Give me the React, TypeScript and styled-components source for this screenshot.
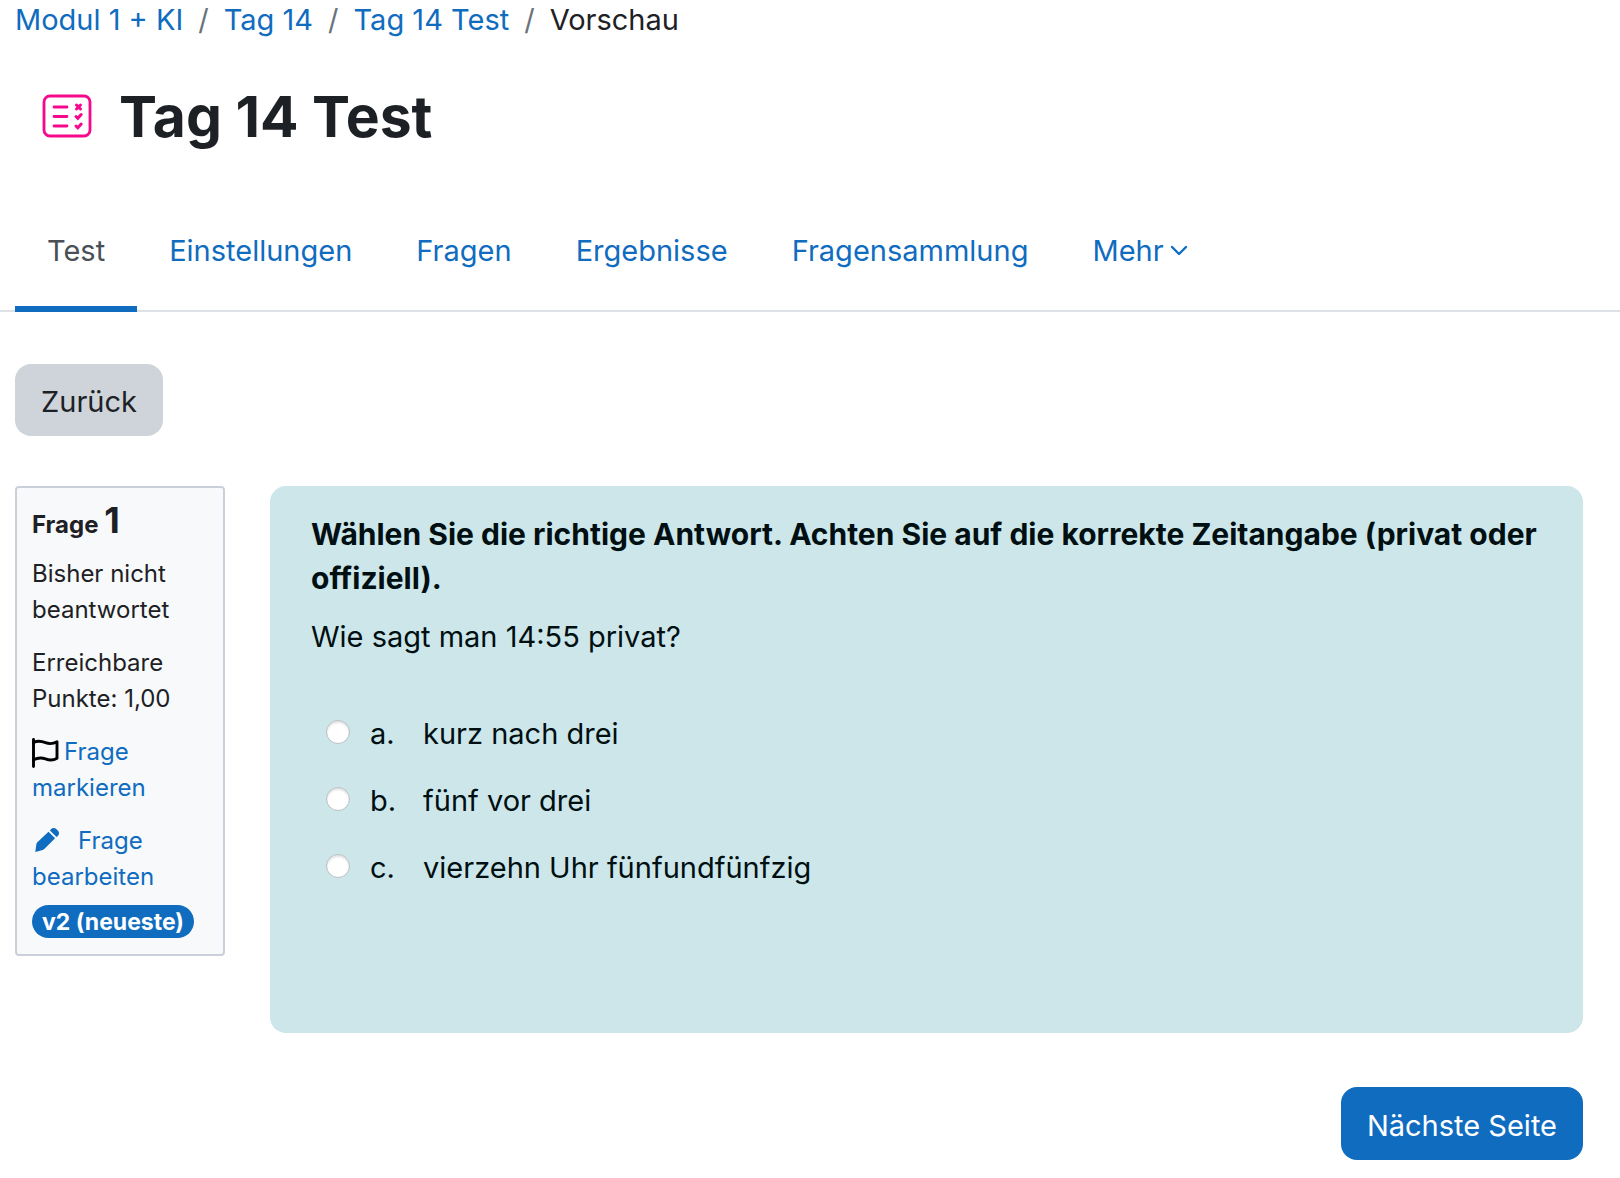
import React from "react";
import styled, { createGlobalStyle } from "styled-components";

const blue = "#0f6cbf";
const ink = "#1d2125";

const GlobalStyle = createGlobalStyle`
  *, *::before, *::after { box-sizing: border-box; }
  body {
    margin: 0;
    background: #fff;
    color: ${ink};
    font-family: Inter, "Liberation Sans", sans-serif;
    font-size: 29px;
    line-height: 44px;
  }
  a { color: ${blue}; text-decoration: none; }
  p, h1, h2, ol, ul { margin: 0; padding: 0; }
`;

const Crumbs = styled.ol`
  display: flex;
  padding: 0 15px;
  margin-top: -2px;
  list-style: none;
`;

const Crumb = styled.li`
  & + &::before {
    content: "/";
    padding: 0 15px;
    color: #6a737b;
  }
`;

const Header = styled.header`
  display: flex;
  align-items: center;
  gap: 27px;
  padding: 37px 15px 0 42px;
`;

const QuizIcon = styled.svg`
  width: 50px;
  height: 44px;
  flex: none;
`;

const Title = styled.h1`
  padding-top: 2px;
  font-size: 57px;
  line-height: 72px;
  font-weight: 700;
`;

const TabBar = styled.nav`
  display: flex;
  margin-top: 37px;
  padding: 0 15px;
  border-bottom: 2px solid #dee2e6;
`;

const Tab = styled.a<{ $active?: boolean }>`
  display: flex;
  align-items: center;
  gap: 6px;
  height: 122px;
  margin-bottom: -2px;
  padding: 6px 32px 0;
  border-bottom: 6px solid ${(p) => (p.$active ? blue : "transparent")};
  color: ${(p) => (p.$active ? "#495057" : blue)};
`;

const Button = styled.button<{ $primary?: boolean }>`
  padding: ${(p) => (p.$primary ? "17px 26px 12px" : "16px 26px 12px")};
  border: 0;
  border-radius: 16px;
  background: ${(p) => (p.$primary ? blue : "#ced4da")};
  color: ${(p) => (p.$primary ? "#fff" : ink)};
  font: inherit;
  cursor: pointer;
`;

const Main = styled.main`
  padding: 52px 37px 18px 15px;
`;

const Question = styled.div`
  display: flex;
  align-items: flex-start;
  gap: 45px;
  margin-top: 50px;
`;

const Info = styled.section`
  flex: none;
  width: 210px;
  padding: 14px 15px 16px;
  border: 2px solid #cad0d9;
  border-radius: 4px;
  background: #f8f9fb;
  font-size: 24px;
  line-height: 36px;
`;

const InfoTitle = styled.h2`
  font-size: 24px;
  line-height: 36px;
  font-weight: 700;
`;

const Number = styled.span`
  font-size: 36px;
`;

const InfoText = styled.div`
  margin-top: 17px;
`;

const FirstText = styled(InfoText)`
  margin-top: 13px;
`;

const FlagIcon = styled.svg`
  width: 27px;
  height: 30px;
  margin: -4px 5px -4px 0;
  vertical-align: -4px;
`;

const PencilIcon = styled.svg`
  width: 30px;
  height: 24px;
  margin-right: 16px;
  vertical-align: -3px;
`;

const Badge = styled.span`
  display: block;
  width: fit-content;
  margin-top: 10px;
  padding: 2px 10px 0;
  border-radius: 17px;
  background: ${blue};
  color: #fff;
  font-size: 23px;
  line-height: 31px;
  font-weight: 700;
  white-space: nowrap;
`;

const Formulation = styled.section`
  flex: 1;
  min-width: 0;
  min-height: 547px;
  padding: 26px 41px;
  border-radius: 16px;
  background: #cde6ea;
  color: #000f11;
`;

const Prompt = styled.p`
  & + & { margin-top: 15px; }
`;

const Instruction = styled.strong`
  display: block;
  font-size: 30px;
  font-weight: 700;
`;

const Answers = styled.fieldset`
  margin: 53px 0 0;
  padding: 0 0 0 15px;
  border: 0;
`;

const Answer = styled.label`
  display: flex;
  height: 67px;
`;

const Radio = styled.input`
  appearance: none;
  flex: none;
  width: 24px;
  height: 24px;
  margin: 8px 20px 0 0;
  border: 1px solid #b9bfc1;
  border-radius: 50%;
  background: #fff;
  box-shadow: inset 0 2px 2px #e3e3e3;
  &:checked { border: 7px solid ${blue}; }
`;

const Letter = styled.span`
  width: 53px;
`;

const Actions = styled.div`
  display: flex;
  justify-content: flex-end;
  margin-top: 54px;
`;

const crumbs = ["Modul 1 + KI", "Tag 14", "Tag 14 Test"];
const tabs = ["Test", "Einstellungen", "Fragen", "Ergebnisse", "Fragensammlung"];
const answers = ["kurz nach drei", "fünf vor drei", "vierzehn Uhr fünfundfünfzig"];

export default function App() {
  return (
    <>
      <GlobalStyle />
      <Crumbs>
        {crumbs.map((c) => (
          <Crumb key={c}><a href="#">{c}</a></Crumb>
        ))}
        <Crumb>Vorschau</Crumb>
      </Crumbs>
      <Header>
        <QuizIcon viewBox="0 0 50 44" fill="none" stroke="#f7078b" strokeWidth="2.8" strokeLinecap="round" aria-hidden="true">
          <rect x="2" y="2" width="46" height="40" rx="6" />
          <path d="M12 13h13M12 22.500h13M12 32h13" />
          <path strokeWidth="3" d="M34.500 11l4 4m0-4l-4 4M34 22.500l1.800 1.800 3.400-3.800M34 32l1.800 1.800 3.400-3.800" />
        </QuizIcon>
        <Title>Tag 14 Test</Title>
      </Header>
      <TabBar>
        {tabs.map((t, i) => (
          <Tab key={t} href="#" $active={i === 0}>{t}</Tab>
        ))}
        <Tab href="#">
          Mehr
          <svg width="18" height="12" viewBox="0 0 18 12" fill="none" stroke="currentColor" strokeWidth="2.400" strokeLinecap="round" strokeLinejoin="round" aria-hidden="true">
            <path d="M2 2l7 7 7-7" />
          </svg>
        </Tab>
      </TabBar>
      <Main>
        <Button type="button">Zurück</Button>
        <Question>
          <Info>
            <InfoTitle>Frage <Number>1</Number></InfoTitle>
            <FirstText>Bisher nicht beantwortet</FirstText>
            <InfoText>Erreichbare Punkte: 1,00</InfoText>
            <InfoText>
              <a href="#">
                <FlagIcon viewBox="0 0 27 30" fill="none" stroke="#000" strokeWidth="2.9" strokeLinecap="round" strokeLinejoin="round" aria-hidden="true">
                  <path d="M1.500 1.500v27" />
                  <path d="M1.500 4.500c4-2 8-1.500 12 .2 4 1.500 8 1 11.500-1v16.500c-3.500 2.200-7.500 2.200-11.500.7-4-1.500-8-1.200-12 .8" />
                </FlagIcon>
                Frage markieren
              </a>
            </InfoText>
            <InfoText>
              <a href="#">
                <PencilIcon viewBox="0 0 30 24" fill="currentColor" aria-hidden="true">
                  <path d="M3.300 24l1-7.500c.2-1 .6-1.700 1.300-2.400L16.500 3.700l6.600 6.500-10.800 10.700c-.7.700-1.400 1.100-2.400 1.400z" />
                  <path d="M17.900 2.400l1.300-1.300c1.400-1.400 3.600-1.400 5 0l1.800 1.700c1.400 1.400 1.400 3.500 0 4.900l-1.400 1.300z" />
                </PencilIcon>
                Frage bearbeiten
              </a>
            </InfoText>
            <Badge>v2 (neueste)</Badge>
          </Info>
          <Formulation>
            <Prompt><Instruction>Wählen Sie die richtige Antwort. Achten Sie auf die korrekte Zeitangabe (privat oder offiziell).</Instruction></Prompt>
            <Prompt>Wie sagt man 14:55 privat?</Prompt>
            <Answers aria-label="Antworten">
              {answers.map((a, i) => (
                <Answer key={a}>
                  <Radio type="radio" name="answer" value={i} />
                  <Letter>{"abc"[i]}.</Letter>
                  <span>{a}</span>
                </Answer>
              ))}
            </Answers>
          </Formulation>
        </Question>
        <Actions>
          <Button type="button" $primary>Nächste Seite</Button>
        </Actions>
      </Main>
    </>
  );
}
